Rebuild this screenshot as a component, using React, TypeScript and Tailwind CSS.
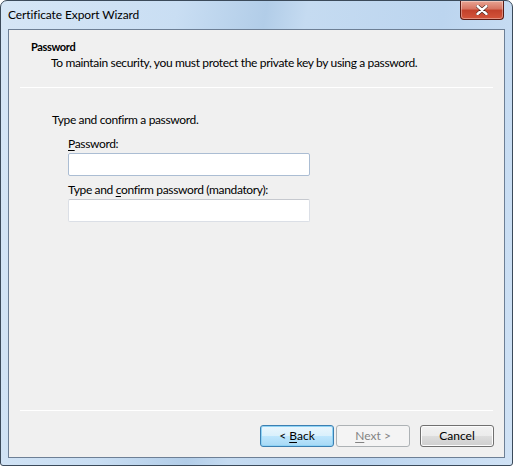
import React from "react";

const font = { fontFamily: 'Lato, "Noto Sans", sans-serif' };

function Button({
  children,
  kind = "normal",
}: {
  children: React.ReactNode;
  kind?: "normal" | "default" | "disabled";
}) {
  const cls =
    kind === "default"
      ? "border-[#3c7fb1] bg-[linear-gradient(#eaf6fd_0%,#d9f0fc_50%,#bee6fd_50%,#a7d9f5_100%)] text-black shadow-[inset_0_0_0_1px_#8fd3f5]"
      : kind === "disabled"
      ? "border-[#adb2b5] bg-[#f4f4f4] text-[#838383]"
      : "border-[#707070] bg-[linear-gradient(#f2f2f2_0%,#ebebeb_50%,#dddddd_50%,#cfcfcf_100%)] text-black shadow-[inset_0_0_0_1px_#fcfcfc]";
  return (
    <div
      className={`w-[74px] h-[22px] rounded-[3px] border flex items-center justify-center text-[12px] tracking-normal ${cls}`}
    >
      {children}
    </div>
  );
}

export default function App() {
  return (
    <div
      className="w-[513px] h-[466px] flex flex-col rounded-t-[7px] rounded-b-[3px] border border-[#3b4a5a] bg-[linear-gradient(100deg,#d6e6f6_0%,#c9def3_30%,#b2cde8_45%,#c5dbf1_52%,#bcd5ef_75%,#d0e2f5_100%)] overflow-hidden"
      style={font}
    >
      {/* Title bar */}
      <div className="h-[28px] flex items-start justify-between">
        <span className="pl-[7px] pt-[6px] text-[12px] tracking-[-0.1px] text-black leading-[16px]">
          Certificate Export Wizard
        </span>
        <div className="mr-[8px] w-[44px] h-[19px] rounded-b-[4px] border border-t-0 border-[#5a1a12] bg-[linear-gradient(#e8a493_0%,#d67360_45%,#c2412b_50%,#d4553b_100%)] flex items-center justify-center shadow-[inset_0_0_0_1px_rgba(255,255,255,0.35)]">
          <svg width="12" height="10" viewBox="0 0 12 10">
            <path
              d="M1.5 1 L10.5 9 M10.5 1 L1.5 9"
              stroke="#3a1a14"
              strokeWidth="3.6"
              strokeLinecap="round"
            />
            <path
              d="M1.5 1 L10.5 9 M10.5 1 L1.5 9"
              stroke="#ffffff"
              strokeWidth="2.4"
              strokeLinecap="round"
            />
          </svg>
        </div>
      </div>

      {/* Client area */}
      <div className="flex-1 mx-[7px] mb-[7px] border border-[#6d7f95] bg-[#f0f0f0] flex flex-col text-[12px] tracking-[-0.35px] text-black">
        {/* Header */}
        <div className="pt-[10px] pl-[22px] pr-[10px]">
          <div className="font-bold text-[11px] leading-[14px]">Password</div>
          <div className="pl-[20px] pt-[1px] leading-[16px]">
            To maintain security, you must protect the private key by using a password.
          </div>
        </div>
        <div className="mx-[11px] mt-[16px] h-px bg-[#a0a0a0] border-b border-white" />

        {/* Body */}
        <div className="pl-[43px] pt-[24px]">
          <div className="leading-[16px]">Type and confirm a password.</div>
          <div className="pl-[16px] pt-[8px]">
            <div className="leading-[16px]">
              <span className="underline underline-offset-2">P</span>assword:
            </div>
            <div className="mt-[1px] w-[242px] h-[23px] bg-white border border-[#abbdd3] rounded-[2px]" />
            <div className="mt-[6px] leading-[16px]">
              Type and <span className="underline underline-offset-2">c</span>onfirm password (mandatory):
            </div>
            <div className="mt-[1px] w-[242px] h-[23px] bg-white border border-[#dbdfe6] border-t-[#c6c9cf] rounded-[2px]" />
          </div>
        </div>

        <div className="flex-1" />

        {/* Footer */}
        <div className="mx-[11px] h-px bg-[#a0a0a0] border-b border-white" />
        <div className="flex justify-end items-center pr-[10px] pt-[14px] pb-[10px]">
          <Button kind="default">
            &lt; <span className="underline underline-offset-2 ml-[3px]">B</span>ack
          </Button>
          <div className="w-[2px]" />
          <Button kind="disabled">
            <span className="underline underline-offset-2">N</span>ext &gt;
          </Button>
          <div className="w-[10px]" />
          <Button>Cancel</Button>
        </div>
      </div>
    </div>
  );
}
